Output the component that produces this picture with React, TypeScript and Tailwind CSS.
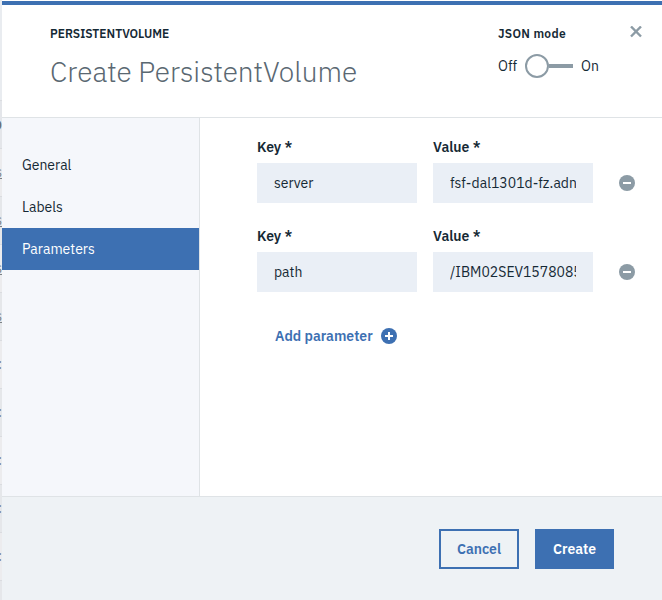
import React, { useState } from "react";

const parameters = [
  { id: "server", key: "server", value: "fsf-dal1301d-fz.adn01.com" },
  { id: "path", key: "path", value: "/IBM02SEV1578085_12/data01" },
];

const sections = ["General", "Labels", "Parameters"];

const tableRows = ["s", "s", "s", "s", ":", ":", ":", ":", ":", ":"];

function Backdrop() {
  return (
    <div aria-hidden="true" className="w-0.5 shrink-0 overflow-hidden bg-[#e9eaed]">
      <div className="h-[100px] bg-[#e9ecf0]" />
      <div className="flex h-12 items-center justify-end border-t border-[#dadce0] bg-[#e4e6ea] text-sm font-bold text-[#6b7075]">
        D
      </div>
      {tableRows.map((text, index) => (
        <div
          key={index}
          className="flex h-12 items-center justify-end border-t border-[#dadce0] pb-0.5 text-sm text-[#7c8287] odd:bg-[#ececee] even:bg-[#e5e7ea]"
        >
          <span className={text === "s" ? "underline" : ""}>{text}</span>
        </div>
      ))}
    </div>
  );
}

function Field({ id, label, value }: { id: string; label: string; value: string }) {
  return (
    <div className="min-w-0 flex-1">
      <label htmlFor={id} className="block text-sm leading-5 font-semibold text-[#152935]">
        {label} *
      </label>
      <input
        id={id}
        type="text"
        defaultValue={value}
        className="mt-1.5 block h-10 w-full bg-[#eaeff6] px-[17px] text-sm text-[#152935] outline-none"
      />
    </div>
  );
}

export default function App() {
  const [json, setJson] = useState(false);
  return (
    <div className="flex h-screen overflow-hidden bg-white font-['IBM_Plex_Sans','Roboto',sans-serif] text-sm text-[#152935]">
      <Backdrop />
      <div className="flex min-w-0 flex-1 flex-col pt-px">
        <header className="flex h-[117px] shrink-0 justify-between border-t-4 border-b border-t-[#3d70b2] border-b-[#dfe3e6] pt-[21px] pr-5 pl-12">
          <div>
            <p className="text-xs leading-4 font-semibold">PERSISTENTVOLUME</p>
            <h1 className="mt-3 text-[28px] leading-9 font-light text-[#5a6872]">
              Create PersistentVolume
            </h1>
          </div>
          <div className="flex items-start">
            <div className="w-[132px]">
              <p id="json-mode" className="text-xs leading-4 font-semibold tracking-wide">
                JSON mode
              </p>
              <label className="mt-3 flex h-6 cursor-pointer items-center">
                <input
                  type="checkbox"
                  aria-labelledby="json-mode"
                  checked={json}
                  onChange={(event) => setJson(event.target.checked)}
                  className="peer sr-only"
                />
                <span className="w-[27px]">Off</span>
                <span className="flex items-center peer-checked:flex-row-reverse">
                  <span className="size-6 rounded-full border-2 border-[#8c9ba5] bg-white" />
                  <span className="h-1 w-6 bg-[#8c9ba5]" />
                </span>
                <span className="ml-2">On</span>
              </label>
            </div>
            <button type="button" aria-label="Close">
              <svg viewBox="0 0 12 12" className="size-3" stroke="#8c9ba5" strokeWidth="2.4">
                <path d="M1 0.5l10 10M11 0.5L1 10.5" />
              </svg>
            </button>
          </div>
        </header>

        <div className="flex min-h-0 flex-1">
          <nav className="w-[198px] shrink-0 border-r border-[#dfe3e6] bg-[#f5f7fb] pt-[26px]">
            {sections.map((name) => (
              <button
                key={name}
                type="button"
                className={
                  name === "Parameters"
                    ? "block h-[42px] w-full bg-[#3d70b2] px-5 text-left text-white"
                    : "block h-[42px] w-full px-5 text-left"
                }
              >
                {name}
              </button>
            ))}
          </nav>

          <main className="min-w-0 flex-1 pt-[19px] pr-[27px] pl-[57px]">
            <div className="flex flex-col gap-[23px]">
              {parameters.map((item) => (
                <div key={item.id} className="flex items-end gap-[26px]">
                  <div className="flex min-w-0 flex-1 gap-4">
                    <Field id={item.id + "-key"} label="Key" value={item.key} />
                    <Field id={item.id + "-value"} label="Value" value={item.value} />
                  </div>
                  <button type="button" aria-label="Remove parameter" className="flex h-10 items-center">
                    <svg viewBox="0 0 16 16" className="size-4">
                      <circle cx="8" cy="8" r="8" fill="#8c9ba5" />
                      <path d="M4 7h8v2H4z" fill="#fff" />
                    </svg>
                  </button>
                </div>
              ))}
            </div>
            <button
              type="button"
              className="mt-6 ml-[18px] flex h-10 items-center gap-2 font-semibold text-[#3d70b2]"
            >
              Add parameter
              <svg viewBox="0 0 16 16" className="size-4">
                <circle cx="8" cy="8" r="8" fill="#3d70b2" />
                <path d="M7 4h2v3h3v2H9v3H7V9H4V7h3z" fill="#fff" />
              </svg>
            </button>
          </main>
        </div>

        <footer className="flex h-[104px] shrink-0 justify-end gap-4 border-t border-[#dfe3e6] bg-[#eef2f5] pt-8 pr-12">
          <button
            type="button"
            className="h-10 w-20 border-2 border-[#3d70b2] font-semibold text-[#3d70b2]"
          >
            Cancel
          </button>
          <button type="button" className="h-10 w-[79px] bg-[#3d70b2] font-semibold text-white">
            Create
          </button>
        </footer>
      </div>
    </div>
  );
}
